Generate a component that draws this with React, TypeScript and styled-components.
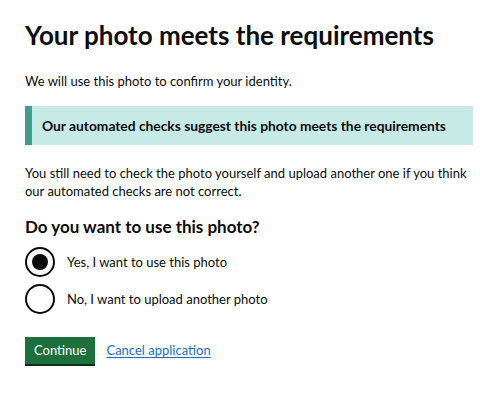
import styled, { createGlobalStyle } from "styled-components";
import { useState } from "react";

const GlobalStyle = createGlobalStyle`
  body {
    margin: 0;
    background: #ffffff;
    font-family: Lato, "Liberation Sans", sans-serif;
    color: #0b0c0c;
  }
`;

const options = [
  { value: "yes", label: "Yes, I want to use this photo" },
  { value: "no", label: "No, I want to upload another photo" },
];

export default function App() {
  const [choice, setChoice] = useState("yes");

  return (
    <>
      <GlobalStyle />
      <Main>
        <Heading>Your photo meets the requirements</Heading>
        <Lead>We will use this photo to confirm your identity.</Lead>
        <Inset>Our automated checks suggest this photo meets the requirements</Inset>
        <Body>
          You still need to check the photo yourself and upload another one if you think
          our automated checks are not correct.
        </Body>
        <Fieldset>
          <Legend>Do you want to use this photo?</Legend>
          <Radios>
            {options.map((o) => (
              <RadioItem key={o.value} onClick={() => setChoice(o.value)}>
                <RadioCircle $checked={choice === o.value} />
                <RadioLabel>{o.label}</RadioLabel>
              </RadioItem>
            ))}
          </Radios>
        </Fieldset>
        <ButtonGroup>
          <Button>Continue</Button>
          <Link href="#">Cancel application</Link>
        </ButtonGroup>
      </Main>
    </>
  );
}

const Main = styled.main`
  padding: 20px 7px 20px 25px;
`;

const Heading = styled.h1`
  margin: 0 0 22px;
  font-size: 26px;
  line-height: 30px;
  font-weight: 700;
`;

const Body = styled.p`
  margin: 0 0 16px;
  font-size: 13px;
  line-height: 18px;
`;

const Lead = styled(Body)`
  line-height: 19px;
  margin-bottom: 15px;
`;

const Inset = styled.div`
  margin: 0 0 19px;
  padding: 10px 10px 9px 10px;
  background: #c8eae6;
  border-left: 7px solid #3f9c8f;
  font-size: 13.8px;
  line-height: 20px;
  font-weight: 700;
`;

const Fieldset = styled.fieldset`
  margin: 0 0 23px;
  padding: 0;
  border: 0;
`;

const Legend = styled.legend`
  padding: 0;
  margin: 0 0 9px;
  font-size: 17px;
  line-height: 22px;
  font-weight: 700;
`;

const Radios = styled.div`
  display: flex;
  flex-direction: column;
  gap: 7px;
`;

const RadioItem = styled.label`
  display: flex;
  align-items: center;
  gap: 12px;
  cursor: pointer;
`;

const RadioCircle = styled.span<{ $checked: boolean }>`
  position: relative;
  width: 30px;
  height: 30px;
  box-sizing: border-box;
  border: 2px solid #0b0c0c;
  border-radius: 50%;
  flex-shrink: 0;

  &::after {
    content: "";
    position: absolute;
    inset: 5px;
    border-radius: 50%;
    background: #0b0c0c;
    display: ${(p) => (p.$checked ? "block" : "none")};
  }
`;

const RadioLabel = styled.span`
  font-size: 13px;
  line-height: 19px;
`;

const ButtonGroup = styled.div`
  display: flex;
  align-items: center;
  gap: 11px;
`;

const Button = styled.button`
  font-family: inherit;
  font-size: 13px;
  line-height: 19px;
  color: #ffffff;
  background: #1d703c;
  border: 0;
  border-radius: 0;
  padding: 4px 9px 4px;
  box-shadow: 0 2px 0 #002d18;
  cursor: pointer;
`;

const Link = styled.a`
  font-size: 13px;
  line-height: 19px;
  color: #1d70b8;
  text-decoration: underline;
  text-underline-offset: 2px;
`;
